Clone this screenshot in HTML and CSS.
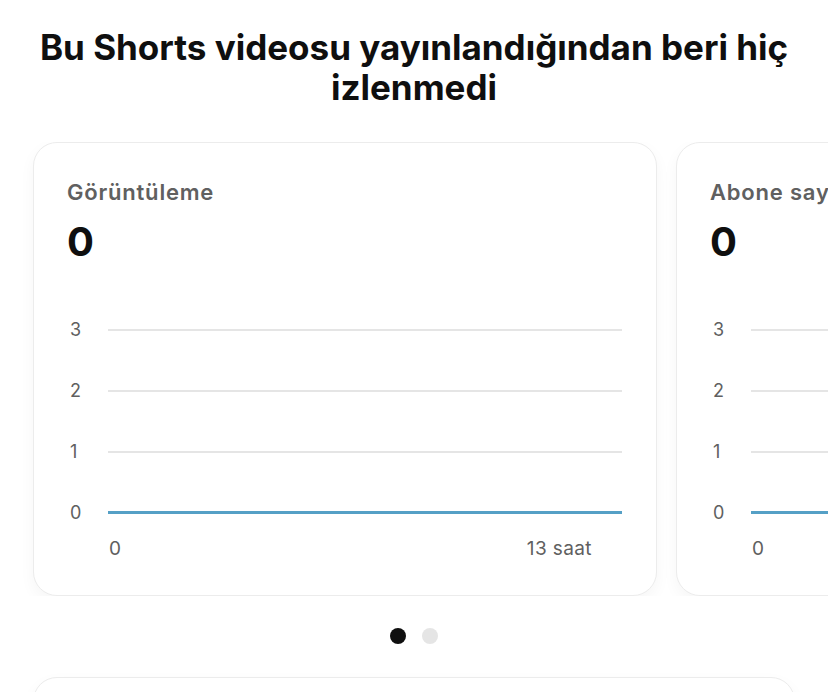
FILE: index.html
```html
<!DOCTYPE html>
<html lang="tr">
<head>
    <meta charset="UTF-8">
    <title>Shorts analiz</title>
    <link rel="stylesheet" href="styles.css">
</head>
<body>

<h1 class="title">Bu Shorts videosu yayınlandığından beri hiç izlenmedi</h1>

<!--kartlar-->
<div class="slider">
    <div class="card">
        <div class="label">Görüntüleme</div>
        <div class="value">0</div>
        <div class="chart">
            <div class="row"><span class="ylab">3</span><span class="line"></span></div>
            <div class="row"><span class="ylab">2</span><span class="line"></span></div>
            <div class="row"><span class="ylab">1</span><span class="line"></span></div>
            <div class="row"><span class="ylab">0</span><span class="line base"></span></div>
            <div class="xaxis"><span>0</span><span>13 saat</span></div>
        </div>
    </div>
    <div class="card">
        <div class="label">Abone sayısı</div>
        <div class="value">0</div>
        <div class="chart">
            <div class="row"><span class="ylab">3</span><span class="line"></span></div>
            <div class="row"><span class="ylab">2</span><span class="line"></span></div>
            <div class="row"><span class="ylab">1</span><span class="line"></span></div>
            <div class="row"><span class="ylab">0</span><span class="line base"></span></div>
            <div class="xaxis"><span>0</span><span>13 saat</span></div>
        </div>
    </div>
</div>

<!--小圆点-->
<ol class="dots">
    <li class="now"></li>
    <li></li>
</ol>

<div class="card wide"></div>

</body>
</html>
```

FILE: styles.css
```css
* {
margin: 0;
padding: 0;
list-style: none;
box-sizing: border-box;
}

body {
background-color: #fff;
font-family: Inter, Roboto, "Liberation Sans", sans-serif;
color: #0f0f0f;
overflow: hidden;
}

.title {
width: 790px;
margin: 27px auto 0;
text-align: center;
font-size: 35px;
line-height: 40px;
font-weight: 700;
letter-spacing: 0;
}

/*横向排列，超出隐藏*/
.slider {
display: flex;
gap: 19px;
padding: 0 0 0 33px;
margin-top: 35px;
overflow: hidden;
}

.card {
flex: 0 0 624px;
height: 454px;
background-color: #fff;
border: 1px solid #ececec;
border-radius: 24px;
box-shadow: 0 6px 16px rgba(0, 0, 0, 0.04);
padding: 35px 34px 0 33px;
}

.label {
font-size: 22px;
line-height: 28px;
font-weight: 600;
letter-spacing: 0.8px;
color: #606060;
}

.value {
margin-top: 14px;
font-size: 40px;
line-height: 44px;
font-weight: 700;
color: #0f0f0f;
}

.chart {
margin-top: 35px;
}

.row {
display: flex;
align-items: center;
height: 61px;
}

.ylab {
width: 41px;
padding-left: 3px;
font-size: 18px;
color: #606060;
}

.line {
flex: 1;
height: 2px;
background-color: #e5e5e5;
}

.line.base {
height: 3px;
background-color: #55a0c6;
}

.xaxis {
display: flex;
justify-content: space-between;
margin-top: -6px;
padding: 0 30px 0 42px;
font-size: 19px;
letter-spacing: 0.4px;
color: #606060;
}

.dots {
display: flex;
justify-content: center;
gap: 16px;
margin-top: 32px;
}

.dots li {
width: 16px;
height: 16px;
border-radius: 50%;
background-color: #e5e5e5;
}

.dots li.now {
background-color: #0f0f0f;
}

.wide {
width: 762px;
margin: 33px 0 0 33px;
}
```
